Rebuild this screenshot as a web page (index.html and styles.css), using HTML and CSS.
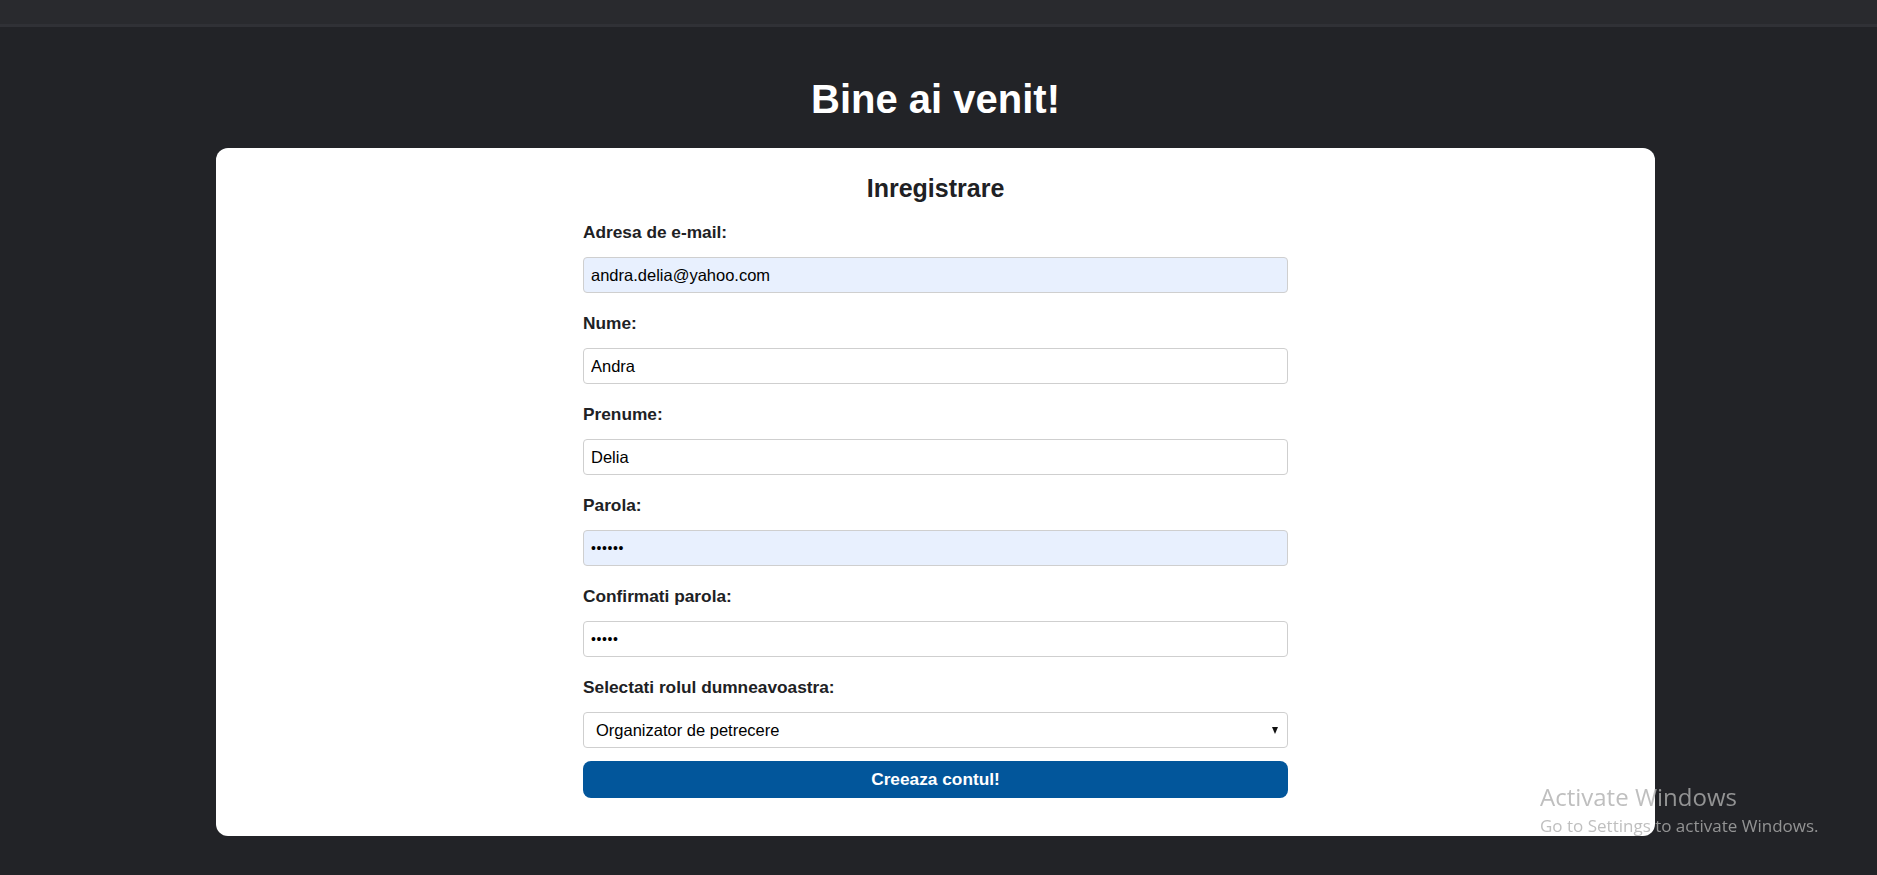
FILE: index.html
```html
<!DOCTYPE html>
<html lang="ro">
<head>
<meta charset="utf-8">
<title>Inregistrare</title>
<link rel="stylesheet" href="styles.css">
</head>
<body>
<div class="topbar"></div>
<main class="page">
  <h1 class="title">Bine ai venit!</h1>
  <section class="card">
    <form class="form">
      <h2 class="form-title">Inregistrare</h2>
      <label class="label" for="email">Adresa de e-mail:</label>
      <input class="field autofill" id="email" type="text" value="andra.delia@yahoo.com">
      <label class="label" for="nume">Nume:</label>
      <input class="field" id="nume" type="text" value="Andra">
      <label class="label" for="prenume">Prenume:</label>
      <input class="field" id="prenume" type="text" value="Delia">
      <label class="label" for="parola">Parola:</label>
      <input class="field autofill" id="parola" type="password" value="andra1">
      <label class="label" for="confirm">Confirmati parola:</label>
      <input class="field" id="confirm" type="password" value="andra">
      <label class="label" for="rol">Selectati rolul dumneavoastra:</label>
      <div class="select-wrap">
        <select class="select" id="rol">
          <option>Organizator de petrecere</option>
          <option>Invitat</option>
        </select>
      </div>
      <button class="submit" type="button">Creeaza contul!</button>
    </form>
  </section>
</main>
<div class="watermark">
  <div class="wm-title">Activate Windows</div>
  <div class="wm-sub">Go to Settings to activate Windows.</div>
</div>
</body>
</html>
```
FILE: styles.css
```css
html, body {
  margin: 0;
  padding: 0;
}
body {
  background: #222327;
  font-family: "Liberation Sans", Arial, sans-serif;
  height: 875px;
  overflow: hidden;
}
.topbar {
  height: 24px;
  background: #292a2e;
  border-bottom: 3px solid #303136;
}
.page {
  padding: 48.5px 6px 0 0;
  display: flex;
  flex-direction: column;
  align-items: center;
}
.title {
  margin: 0 0 26.5px;
  font-size: 40px;
  line-height: 46px;
  font-weight: bold;
  color: #ffffff;
}
.card {
  width: 1439px;
  box-sizing: border-box;
  background: #ffffff;
  border-radius: 12px;
  padding: 26px 0 38px;
  display: flex;
  justify-content: center;
}
.form {
  width: 705px;
  display: flex;
  flex-direction: column;
}
.form-title {
  margin: 0 0 19px;
  text-align: center;
  font-size: 25px;
  line-height: 28.7px;
  font-weight: bold;
  color: #202124;
}
.label {
  display: block;
  font-size: 17.3px;
  line-height: 20px;
  font-weight: bold;
  color: #202124;
  margin-bottom: 15.5px;
}
.field {
  display: block;
  box-sizing: border-box;
  width: 100%;
  height: 36px;
  margin: 0 0 19.5px;
  padding: 0 7px;
  border: 1px solid #cfcfcf;
  border-radius: 4px;
  background: #ffffff;
  font-family: "Liberation Sans", Arial, sans-serif;
  font-size: 16.5px;
  color: #000000;
  outline: none;
}
.field.autofill {
  background: #e8f0fe;
}
.field[type="password"] {
  font-size: 14px;
  letter-spacing: 0.6px;
}
.select-wrap {
  position: relative;
  margin-bottom: 13px;
}
.select-wrap::after {
  content: "";
  position: absolute;
  right: 10px;
  top: 15px;
  border-left: 3.5px solid transparent;
  border-right: 3.5px solid transparent;
  border-top: 7px solid #111111;
  pointer-events: none;
}
.select {
  display: block;
  box-sizing: border-box;
  width: 100%;
  height: 36px;
  padding: 0 24px 0 12px;
  border: 1px solid #cfcfcf;
  border-radius: 4px;
  background: #ffffff;
  font-family: "Liberation Sans", Arial, sans-serif;
  font-size: 16.5px;
  color: #000000;
  appearance: none;
  -webkit-appearance: none;
  outline: none;
}
.submit {
  display: block;
  width: 100%;
  height: 37px;
  border: none;
  border-radius: 8px;
  background: #02569b;
  color: #ffffff;
  font-family: "Liberation Sans", Arial, sans-serif;
  font-size: 17.3px;
  font-weight: bold;
  cursor: pointer;
}
.watermark {
  position: fixed;
  left: 1540px;
  top: 782px;
  font-family: "Open Sans", "Noto Sans", sans-serif;
  color: rgba(175, 175, 175, 0.8);
  pointer-events: none;
  white-space: nowrap;
}
.wm-title {
  font-size: 24px;
  line-height: 29px;
}
.wm-sub {
  font-size: 17px;
  line-height: 22px;
  margin-top: 4px;
}
```
